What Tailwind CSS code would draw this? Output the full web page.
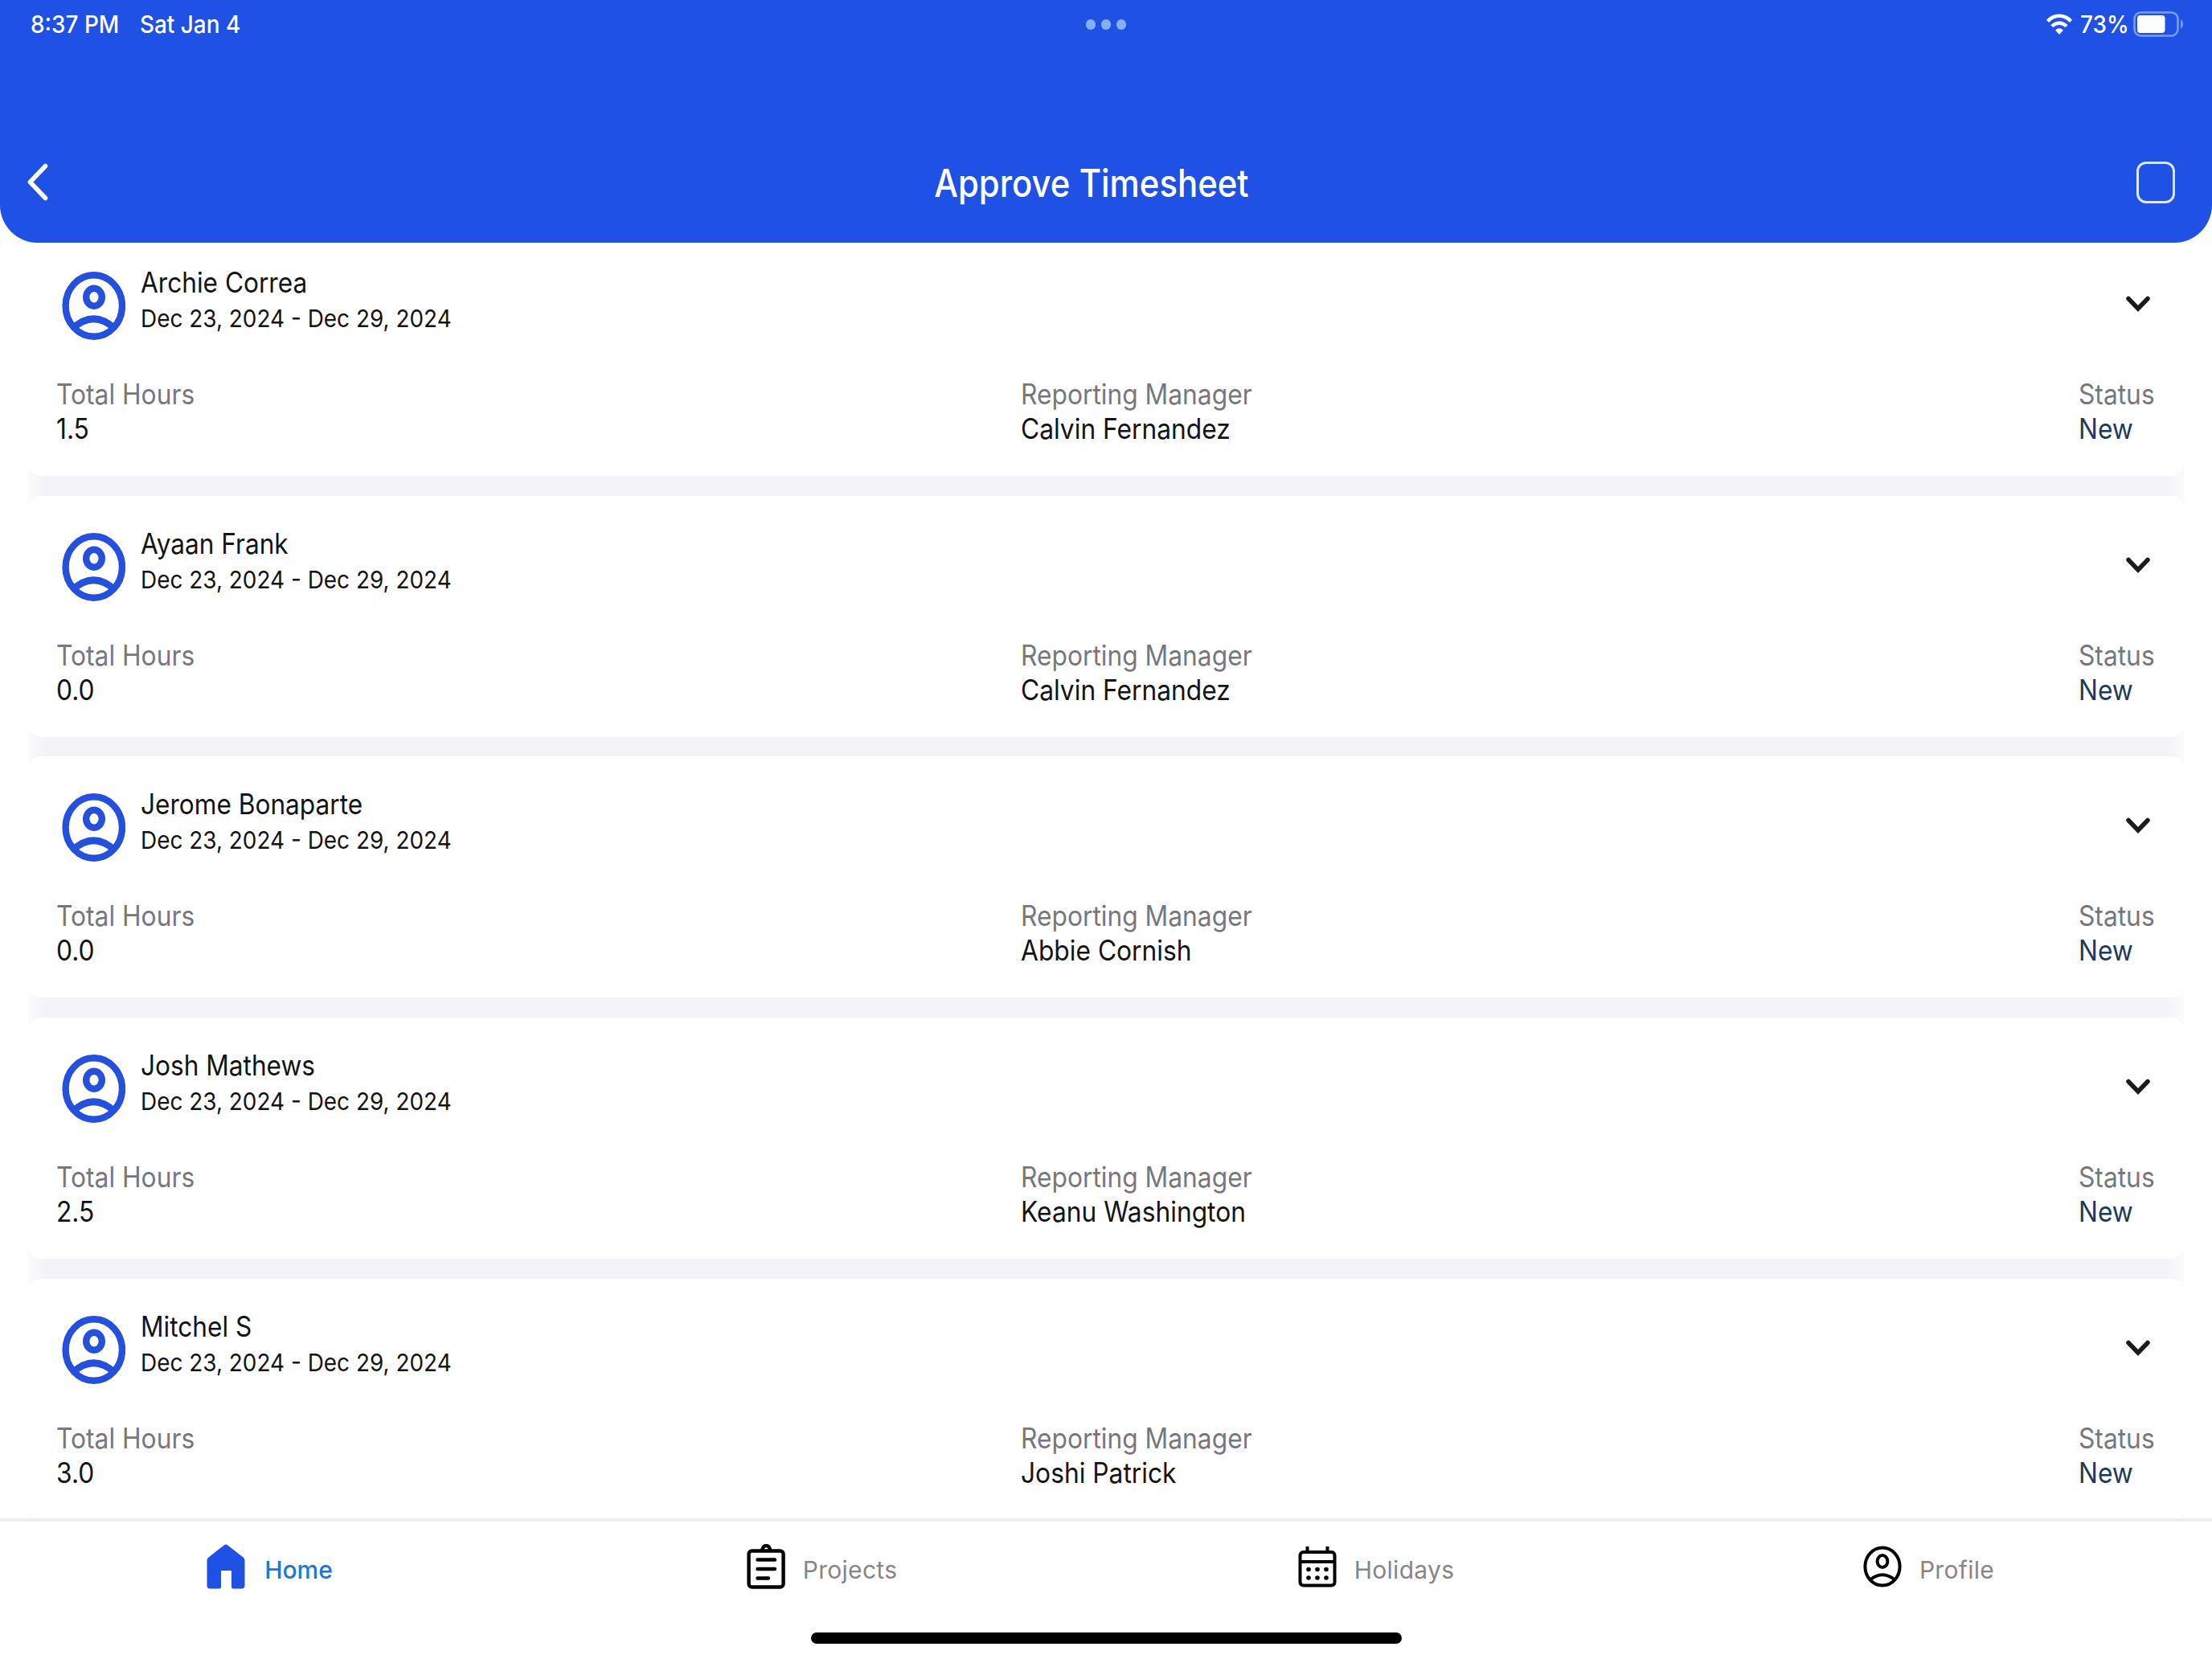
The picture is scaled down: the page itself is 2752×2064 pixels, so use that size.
<!DOCTYPE html>
<html lang="en">
<head>
  <meta charset="UTF-8" />
  <meta name="viewport" content="width=device-width, initial-scale=1.0"/>
  <title>Approve Timesheet</title>
  <script src="https://cdn.jsdelivr.net/npm/@tailwindcss/browser@4"></script>
</head>
<body class="bg-white font-['Inter',sans-serif] w-[2752px] h-[2064px] overflow-hidden flex flex-col">
  <!-- Header -->
  <header class="h-[302px] shrink-0 bg-[#1f51e5] text-white rounded-b-[47px] flex flex-col justify-between">
    <!-- Status bar -->
    <div class="h-[60px] pl-[38px] pr-[35px] grid grid-cols-3 items-center text-[30px] leading-[60px] font-medium">
      <div class="flex">
        <span class="w-[136px] whitespace-nowrap origin-left scale-x-93">8:37 PM</span>
        <span class="whitespace-nowrap origin-left scale-x-93">Sat Jan 4</span>
      </div>
      <div class="flex justify-center gap-[7px] pr-[3px]">
        <span class="w-3 h-[13px] rounded-full bg-[#84b0fb]"></span>
        <span class="w-3 h-[13px] rounded-full bg-[#84b0fb]"></span>
        <span class="w-3 h-[13px] rounded-full bg-[#84b0fb]"></span>
      </div>
      <div class="flex justify-end items-center">
        <svg class="w-8 h-[26px]" viewBox="0 0 32 26" fill="none" stroke="white" stroke-width="4.6">
          <path d="M1.6 9.4C9.6 .6 22.4 .6 30.4 9.4"/>
          <path d="M7 15.8C12 10.4 20 10.4 25 15.8"/>
          <path d="M11 20.4Q16 16 21 20.4L16 26Z" fill="white" stroke="none"/>
        </svg>
        <span class="ml-[10px] w-[66px] whitespace-nowrap origin-left scale-x-93">73%</span>
        <svg class="w-[63px] h-8" viewBox="0 0 63 32">
          <rect x="1.5" y="1.5" width="54" height="29" rx="8" fill="none" stroke="#7b9bf3" stroke-width="2.6"/>
          <rect x="5" y="5" width="34.5" height="22" rx="4" fill="white"/>
          <path d="M59 10.5C63 12 63 20 59 21.5Z" fill="#7b9bf3"/>
        </svg>
      </div>
    </div>
    <!-- Title bar -->
    <div class="h-[150px] pl-[34px] pr-[46px] flex items-center justify-between">
      <svg class="w-[26px] h-12" viewBox="0 0 26 48" fill="none" stroke="white" stroke-width="5.6" stroke-linecap="round" stroke-linejoin="round">
        <path d="M22.5 3.5L3.5 23.5L22.5 43.5"/>
      </svg>
      <h1 class="mt-[2px] mr-[2px] text-[47.5px] leading-none font-medium scale-x-[0.882]">Approve Timesheet</h1>
      <span class="w-12 h-[52px] rounded-[12px] border-3 border-[#dbe5fb]"></span>
    </div>
  </header>

  <!-- Timesheet list -->
  <main class="mt-[36px] h-[1551px] shrink-0 overflow-hidden px-[35px]">
    <div id="timesheets" class="-mt-[46px] flex flex-col gap-[24.7px] bg-[linear-gradient(to_right,#fbfbfd,#f3f2f7_24px,#f3f2f7_calc(100%-24px),#fbfbfd)]"></div>
  </main>

  <!-- Bottom tabs -->
  <footer class="h-[175px] shrink-0 bg-white border-t-4 border-[#eeeeee]">
    <nav class="h-[112px] grid grid-cols-4 text-[30px] leading-none tracking-[0.3px] text-[#868686]">
      <a class="flex items-center justify-center gap-[24px] pr-[17px] text-[#1a78d6]">
        <svg class="w-12 h-14" viewBox="0 0 48 56" fill="#1f51e5">
          <path d="M22 1.2Q24 -.2 26 1.2L45.5 16.4Q47.5 18 47.5 20.5V51.5Q47.5 55.5 43.5 55.5H33Q31 55.5 31 53.5V34Q31 33 30 33H19Q18 33 18 34V53.5Q18 55.5 16 55.5H4.5Q.5 55.5 .5 51.5V20.5Q.5 18 2.5 16.4Z"/>
        </svg>
        <span class="mt-[8px] font-medium tracking-normal">Home</span>
      </a>
      <a class="flex items-center justify-center gap-[22px] pr-[19px]">
        <svg class="w-12 h-14" viewBox="0 0 48 56" fill="none" stroke="black" stroke-width="4.4" stroke-linecap="round">
          <rect x="2.6" y="8.5" width="43" height="45" rx="4"/>
          <path d="M19.5 8C19.5 0 29 0 29 8"/>
          <path d="M13.5 19.5H35M13.5 31H35M13.5 42.5H27"/>
        </svg>
        <span class="mt-[8px]">Projects</span>
      </a>
      <a class="flex items-center justify-center gap-[22px] pr-[16px]">
        <svg class="w-12 h-[52px]" viewBox="0 0 48 52" stroke="black" stroke-width="4" fill="none">
          <rect x="2.5" y="8" width="43" height="41.5" rx="4"/>
          <path d="M2.5 20H45.5M11.5 1V8M36.5 1V8"/>
          <g fill="black" stroke="none">
            <circle cx="13" cy="29.5" r="2.8"/><circle cx="24" cy="29.5" r="2.8"/><circle cx="35" cy="29.5" r="2.8"/>
            <circle cx="13" cy="40" r="2.8"/><circle cx="24" cy="40" r="2.8"/><circle cx="35" cy="40" r="2.8"/>
          </g>
        </svg>
        <span class="mt-[8px]">Holidays</span>
      </a>
      <a class="flex items-center justify-center gap-[22px] pr-[17px]">
        <svg class="w-12 h-[52px]" viewBox="0 0 48 52" fill="none" stroke="black" stroke-width="4">
          <ellipse cx="24" cy="26" rx="21.6" ry="23.6"/>
          <ellipse cx="24" cy="19.5" rx="6.4" ry="7.4"/>
          <path d="M8.5 42.5Q24 30 39.5 42.5"/>
        </svg>
        <span class="mt-[8px]">Profile</span>
      </a>
    </nav>
    <div class="mt-[26px] mx-auto w-[735px] h-[14px] rounded-full bg-black"></div>
  </footer>

  <!-- Scripts -->
  <script>
    const timesheets = [
      { name: "Archie Correa", hours: "1.5", manager: "Calvin Fernandez" },
      { name: "Ayaan Frank", hours: "0.0", manager: "Calvin Fernandez" },
      { name: "Jerome Bonaparte", hours: "0.0", manager: "Abbie Cornish" },
      { name: "Josh Mathews", hours: "2.5", manager: "Keanu Washington" },
      { name: "Mitchel S", hours: "3.0", manager: "Joshi Patrick" }
    ];

    function column(label, value, color) {
      return `
        <div class="origin-left scale-x-[0.907] whitespace-nowrap">
          <p class="text-[#77777c]">${label}</p>
          <p class="${color}">${value}</p>
        </div>`;
    }

    document.getElementById("timesheets").innerHTML = timesheets.map(t => `
      <section class="h-[300px] shrink-0 bg-white rounded-[16px] pt-[38px] pl-[35px] pr-[42px] text-[35px] leading-[43px]">
        <div class="h-[90px] flex items-start">
          <svg class="ml-[7px] mt-[8px] w-[79px] h-[85px] shrink-0" viewBox="0 0 79 85" fill="none" stroke="#2450dc" stroke-width="8.4">
            <ellipse cx="39.8" cy="42.5" rx="35.2" ry="38.2"/>
            <ellipse cx="40" cy="31.7" rx="9.8" ry="11"/>
            <path d="M13 71Q39.5 46.5 66 71"/>
          </svg>
          <div class="ml-[19px] flex-1 whitespace-nowrap text-[#141414]">
            <p class="origin-left scale-x-[0.903]">${t.name}</p>
            <p class="text-[30px] leading-[46px] origin-left scale-x-[0.931]">Dec 23, 2024 - Dec 29, 2024</p>
          </div>
          <svg class="mt-[38px] w-[30px] h-[21px]" viewBox="0 0 30 21" fill="none" stroke="#1c1c1c" stroke-width="5.5" stroke-linecap="round">
            <path d="M3 3.5L15 16L27 3.5"/>
          </svg>
        </div>
        <div class="mt-[49px] grid grid-cols-[1200px_1316px_100px]">
          ${column("Total Hours", t.hours, "text-[#141414]")}
          ${column("Reporting Manager", t.manager, "text-[#141414]")}
          ${column("Status", "New", "text-[#1d3a5a]")}
        </div>
      </section>`).join("");
  </script>
</body>
</html>
